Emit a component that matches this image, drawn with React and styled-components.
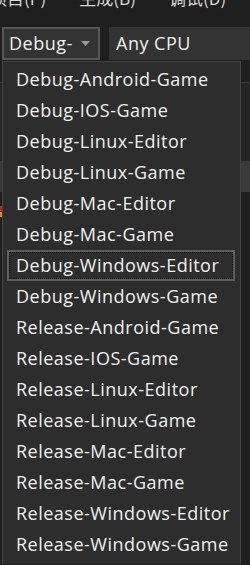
import React from "react";
import styled, { createGlobalStyle } from "styled-components";

const Global = createGlobalStyle`
  html, body { margin: 0; padding: 0; background: #1f1f1f; }
  body { width: 250px; height: 565px; overflow: hidden; font-family: "Open Sans", "Noto Sans", "Noto Sans CJK SC", sans-serif; }
`;

const Page = styled.div`
  position: relative;
  width: 250px;
  height: 565px;
  overflow: hidden;
  background: #1f1f1f;
  display: flex;
  flex-direction: column;
`;

const MenuBar = styled.div`
  height: 27px;
  overflow: hidden;
  display: flex;
  align-items: flex-start;
  gap: 33px;
`;

const MenuItem = styled.span`
  margin-top: -14px;
  margin-left: ${(p) => p.$offset || 0}px;
  font-size: 17px;
  line-height: 24px;
  color: #d6d6d6;
  font-family: "Noto Sans CJK SC", "Open Sans", sans-serif;
  white-space: nowrap;
`;

const Toolbar = styled.div`
  height: 34px;
  display: flex;
  align-items: stretch;
  padding-left: 2px;
  gap: 9px;
`;

const Combo = styled.div`
  box-sizing: border-box;
  width: ${(p) => p.$w}px;
  flex: ${(p) => (p.$grow ? 1 : "none")};
  background: #333333;
  border: ${(p) => (p.$active ? "2px solid #565656" : "none")};
  display: flex;
  align-items: center;
  padding-left: ${(p) => (p.$active ? 5 : 7)}px;
  padding-right: 8px;
  color: #f1f1f1;
  font-size: 18px;
  letter-spacing: 0.5px;
`;

const ComboText = styled.span`
  flex: 1;
  white-space: nowrap;
  overflow: hidden;
`;

const Arrow = styled.svg`
  width: 9px;
  height: 5px;
  flex: none;
`;

const Backdrop = styled.div`
  flex: 1;
  display: flex;
  flex-direction: column;
`;

const BgBand = styled.div`
  height: ${(p) => p.$h}px;
  background: ${(p) => p.$bg};
  border-top: ${(p) => (p.$line ? "1px solid #3a3a3a" : "none")};
  position: relative;
`;

const Marker = styled.div`
  position: absolute;
  left: 0;
  top: ${(p) => p.$top}px;
  width: 2px;
  height: ${(p) => p.$h}px;
  background: ${(p) => p.$c};
`;

const Dropdown = styled.ul`
  position: absolute;
  left: 2px;
  top: 61px;
  width: 239px;
  box-sizing: border-box;
  margin: 0;
  padding: 1.5px 0 4px;
  list-style: none;
  background: #2d2d2d;
  border: 1px solid #434343;
  border-bottom: none;
`;

const Option = styled.li`
  position: relative;
  height: 31px;
  margin: 0 5px 0 4px;
  box-sizing: border-box;
  display: flex;
  align-items: center;
  padding-left: 7px;
  font-size: 18px;
  letter-spacing: 0.5px;
  color: #f1f1f1;
  white-space: nowrap;
  border: 2px solid ${(p) => (p.$focus ? "#5e5e5e" : "transparent")};
  &::after {
    content: "";
    display: ${(p) => (p.$focus ? "block" : "none")};
    position: absolute;
    inset: 0;
    border: 1px dotted #0a0a0a;
  }
`;

const items = [
  "Debug-Android-Game",
  "Debug-IOS-Game",
  "Debug-Linux-Editor",
  "Debug-Linux-Game",
  "Debug-Mac-Editor",
  "Debug-Mac-Game",
  "Debug-Windows-Editor",
  "Debug-Windows-Game",
  "Release-Android-Game",
  "Release-IOS-Game",
  "Release-Linux-Editor",
  "Release-Linux-Game",
  "Release-Mac-Editor",
  "Release-Mac-Game",
  "Release-Windows-Editor",
  "Release-Windows-Game",
];

export default function App() {
  return (
    <Page>
      <Global />
      <MenuBar>
        <MenuItem $offset={-10}>项目(P)</MenuItem>
        <MenuItem>生成(B)</MenuItem>
        <MenuItem>调试(D)</MenuItem>
      </MenuBar>
      <Toolbar>
        <Combo $w={98} $active>
          <ComboText>Debug-</ComboText>
          <Arrow viewBox="0 0 9 5">
            <path d="M0 0 L9 0 L4.5 5 Z" fill="#9a9a9a" />
          </Arrow>
        </Combo>
        <Combo $grow>
          <ComboText>Any CPU</ComboText>
        </Combo>
      </Toolbar>
      <Backdrop>
        <BgBand $h={22} $bg="#1f1f1f" />
        <BgBand $h={78} $bg="#252526" $line />
        <BgBand $h={31} $bg="#3a3a3a" />
        <BgBand $h={80} $bg="#1f1f1f">
          <Marker $top={14} $h={5} $c="#b02a2a" />
          <Marker $top={20} $h={5} $c="#e08a1c" />
        </BgBand>
        <BgBand $h={293} $bg="#1f1f1f" />
      </Backdrop>
      <Dropdown>
        {items.map((t) => (
          <Option key={t} $focus={t === "Debug-Windows-Editor"}>
            {t}
          </Option>
        ))}
      </Dropdown>
    </Page>
  );
}
